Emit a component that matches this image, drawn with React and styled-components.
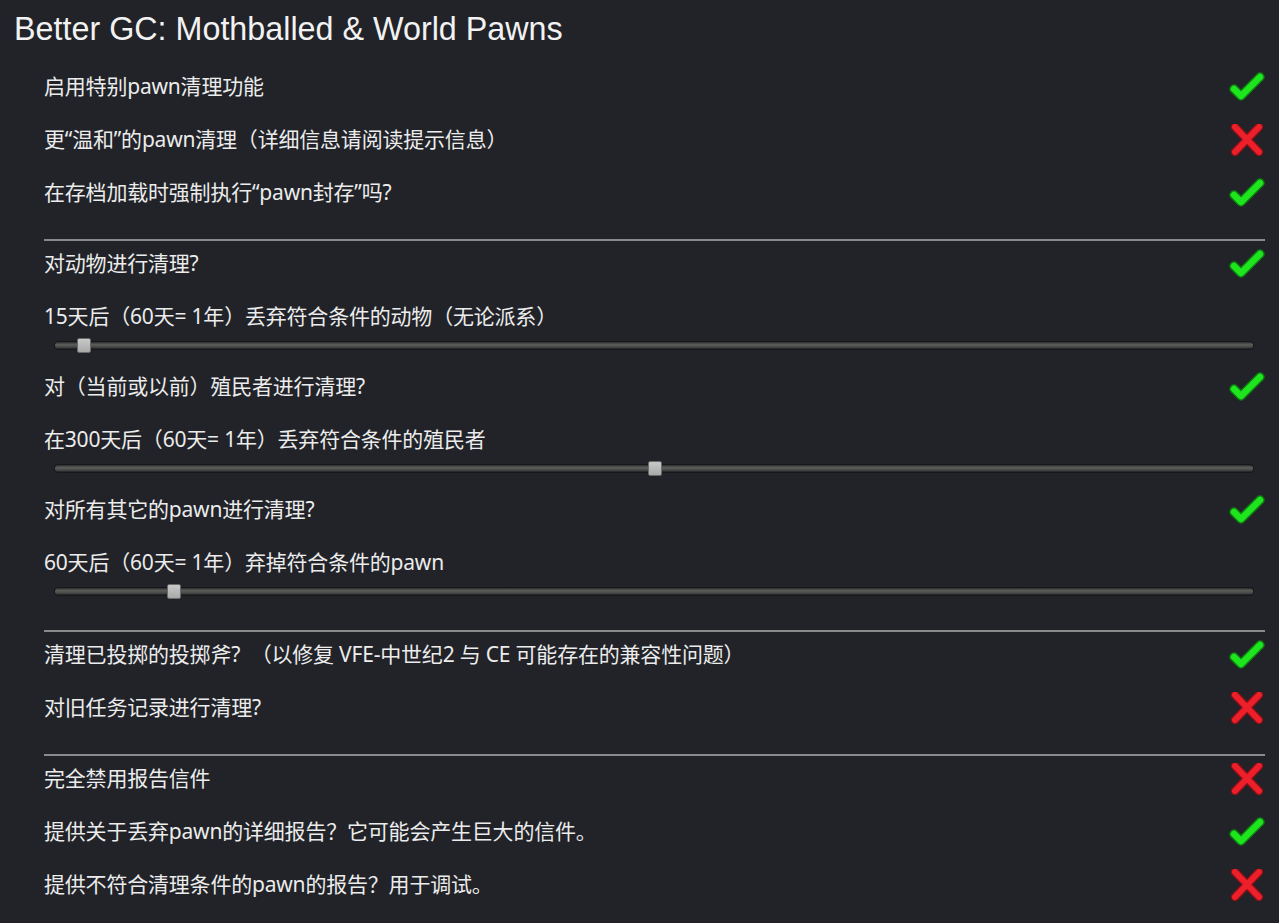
import React from 'react';
import styled, { createGlobalStyle } from 'styled-components';

const GlobalStyle = createGlobalStyle`
  html, body {
    margin: 0;
    padding: 0;
    background: #212328;
  }
  body {
    font-family: "Noto Sans", "Noto Sans CJK SC", sans-serif;
    color: #ececec;
  }
`;

const Page = styled.div`
  width: 1279px;
  height: 923px;
  overflow: hidden;
  box-sizing: border-box;
  padding: 11px 14px 0 14px;
`;

const Title = styled.h1`
  margin: 0;
  font-family: "Liberation Sans", Arial, sans-serif;
  font-weight: normal;
  font-size: 32.3px;
  line-height: 37px;
  color: #f2f2f2;
`;

const List = styled.div`
  display: flex;
  flex-direction: column;
  padding: 24px 0 0 30px;
`;

const Row = styled.div`
  display: flex;
  align-items: center;
  justify-content: space-between;
  height: 30px;
  margin-bottom: 23px;
  font-size: 21px;
  letter-spacing: -0.2px;
`;

const Label = styled.span`
  white-space: pre;
  padding-bottom: 4px;
`;

const Divider = styled.div`
  height: 2px;
  background: #8a8a8c;
  margin: ${p => p.$top ?? 8}px 0 8px 0;
`;

const SliderWrap = styled.div`
  position: relative;
  margin: -13px 12px 22px 11px;
  height: 8px;
`;

const Track = styled.div`
  height: 7px;
  border-radius: 4px;
  background: linear-gradient(#2a2b2d 0%, #5a5c5a 35%, #4a4c4a 70%, #1e1f21 100%);
  box-shadow: 0 0 0 1px #161719;
`;

const Thumb = styled.div`
  position: absolute;
  top: -4px;
  width: 14px;
  height: 15px;
  margin-left: -7px;
  box-sizing: border-box;
  border-radius: 2px;
  background: linear-gradient(#c8c8c8, #a9a9a9);
  border: 1px solid #6a6a6a;
`;

const Check = () => (
  <svg width="36" height="32" viewBox="0 0 36 32">
    <path d="M5 18 L12 25 L31 6" fill="none" stroke="#0f7a12" strokeWidth="9.5" strokeLinecap="round" strokeLinejoin="round" />
    <path d="M5 18 L12 25 L31 6" fill="none" stroke="#1ee51e" strokeWidth="6.5" strokeLinecap="round" strokeLinejoin="round" />
  </svg>
);

const Cross = () => (
  <svg width="36" height="32" viewBox="0 0 36 32">
    <path d="M6 3 L30 28 M30 3 L6 28" fill="none" stroke="#8a1015" strokeWidth="8.5" strokeLinecap="round" />
    <path d="M6 3 L30 28 M30 3 L6 28" fill="none" stroke="#ec1f2a" strokeWidth="6" strokeLinecap="round" />
  </svg>
);

const Toggle = ({ label, on }) => (
  <Row>
    <Label>{label}</Label>
    {on ? <Check /> : <Cross />}
  </Row>
);

const Slider = ({ label, pct }) => (
  <>
    <Row>
      <Label>{label}</Label>
    </Row>
    <SliderWrap>
      <Track />
      <Thumb style={{ left: `${pct}%` }} />
    </SliderWrap>
  </>
);

export default function App() {
  return (
    <>
      <GlobalStyle />
      <Page>
        <Title>Better GC: Mothballed &amp; World Pawns</Title>
        <List>
          <Toggle label="启用特别pawn清理功能" on />
          <Toggle label="更“温和”的pawn清理（详细信息请阅读提示信息）" on={false} />
          <Toggle label="在存档加载时强制执行“pawn封存”吗?" on />
          <Divider />
          <Toggle label="对动物进行清理?" on />
          <Slider label="15天后（60天= 1年）丢弃符合条件的动物（无论派系）" pct={2.4} />
          <Toggle label="对（当前或以前）殖民者进行清理?" on />
          <Slider label="在300天后（60天= 1年）丢弃符合条件的殖民者" pct={50.1} />
          <Toggle label="对所有其它的pawn进行清理?" on />
          <Slider label="60天后（60天= 1年）弃掉符合条件的pawn" pct={9.9} />
          <Divider $top={12} />
          <Toggle label="清理已投掷的投掷斧?  （以修复 VFE-中世纪2 与 CE 可能存在的兼容性问题）" on />
          <Toggle label="对旧任务记录进行清理?" on={false} />
          <Divider />
          <Toggle label="完全禁用报告信件" on={false} />
          <Toggle label="提供关于丢弃pawn的详细报告？它可能会产生巨大的信件。" on />
          <Toggle label="提供不符合清理条件的pawn的报告？用于调试。" on={false} />
        </List>
      </Page>
    </>
  );
}
